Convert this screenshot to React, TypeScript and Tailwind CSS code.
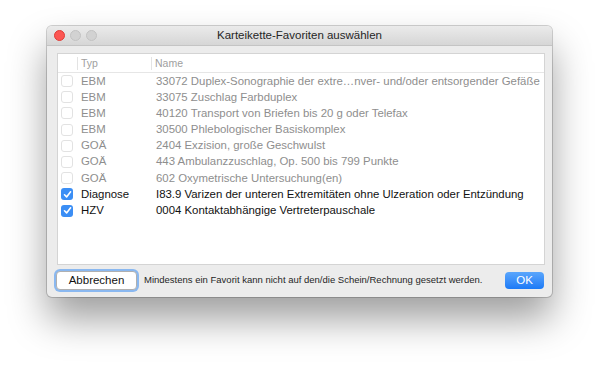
import React from "react";

const rows: { typ: string; name: string; checked: boolean }[] = [
  { typ: "EBM", name: "33072 Duplex-Sonographie der extre…nver- und/oder entsorgender Gefäße", checked: false },
  { typ: "EBM", name: "33075 Zuschlag Farbduplex", checked: false },
  { typ: "EBM", name: "40120 Transport von Briefen bis 20 g oder Telefax", checked: false },
  { typ: "EBM", name: "30500 Phlebologischer Basiskomplex", checked: false },
  { typ: "GOÄ", name: "2404 Exzision, große Geschwulst", checked: false },
  { typ: "GOÄ", name: "443 Ambulanzzuschlag, Op. 500 bis 799 Punkte", checked: false },
  { typ: "GOÄ", name: "602 Oxymetrische Untersuchung(en)", checked: false },
  { typ: "Diagnose", name: "I83.9 Varizen der unteren Extremitäten ohne Ulzeration oder Entzündung", checked: true },
  { typ: "HZV", name: "0004 Kontaktabhängige Vertreterpauschale", checked: true },
];

function Check({ checked }: { checked: boolean }) {
  if (checked) {
    return (
      <div className="w-[12px] h-[12px] rounded-[3px] bg-[#3b8ef5] flex items-center justify-center">
        <svg width="9" height="9" viewBox="0 0 9 9">
          <path d="M1.5 4.8 L3.6 6.9 L7.6 1.8" fill="none" stroke="white" strokeWidth="1.6" strokeLinecap="round" strokeLinejoin="round" />
        </svg>
      </div>
    );
  }
  return <div className="w-[12px] h-[12px] rounded-[3px] bg-white border border-[#e2e2e2]" />;
}

export default function App() {
  return (
    <div
      className="w-[600px] h-[365px] bg-white pl-[47px] pt-[26px] overflow-hidden"
      style={{ fontFamily: '"Liberation Sans", Arial, sans-serif' }}
    >
      <div className="w-[505px] h-[271px] bg-[#ececec] rounded-[5px] shadow-[0_0_0_1px_rgba(0,0,0,0.18),0_22px_38px_rgba(0,0,0,0.38)] flex flex-col overflow-hidden">
        {/* Title bar */}
        <div className="relative h-[20px] shrink-0 bg-gradient-to-b from-[#ebebeb] to-[#d6d6d6] border-b border-[#c4c4c4] flex items-center justify-center">
          <div className="absolute left-[7px] top-[4px] flex gap-[5px]">
            <div className="w-[11px] h-[11px] rounded-full bg-[#fc5753] border border-[#df3d39]" />
            <div className="w-[11px] h-[11px] rounded-full bg-[#d2d2d2] border border-[#c2c2c2]" />
            <div className="w-[11px] h-[11px] rounded-full bg-[#d2d2d2] border border-[#c2c2c2]" />
          </div>
          <span className="text-[11.5px] text-[#262626] leading-none">Karteikette-Favoriten auswählen</span>
        </div>

        {/* Table */}
        <div className="mt-[7px] ml-[10px] mr-[7px] h-[212px] bg-white border border-[#d4d4d4] flex flex-col">
          <div className="h-[19px] shrink-0 flex items-center border-b border-[#e6e6e6] text-[10.5px] text-[#a0a0a0]">
            <div className="w-[20px] h-[13px] shrink-0 border-r border-[#e3e3e3]" />
            <div className="w-[74px] h-[13px] shrink-0 pl-[3px] border-r border-[#e3e3e3] leading-[13px]">Typ</div>
            <div className="pl-[3px] leading-[13px]">Name</div>
          </div>
          {rows.map((r, i) => (
            <div
              key={i}
              className={`h-[16.2px] shrink-0 flex items-center text-[11.4px] ${r.checked ? "text-[#111]" : "text-[#8e8e8e]"}`}
            >
              <div className="w-[23px] shrink-0 pl-[3px] flex items-center">
                <Check checked={r.checked} />
              </div>
              <div className="w-[75px] shrink-0 whitespace-nowrap">{r.typ}</div>
              <div className="whitespace-nowrap">{r.name}</div>
            </div>
          ))}
        </div>

        {/* Footer */}
        <div className="mt-[6px] ml-[9px] mr-[8px] flex items-center">
          <button className="w-[81px] h-[19px] shrink-0 bg-white rounded-[4px] border border-[#b0b0b0] shadow-[0_0_0_2px_#8ab8f0] text-[11.5px] text-[#111] leading-none">
            Abbrechen
          </button>
          <span className="ml-[7px] text-[9.5px] text-[#262626] whitespace-nowrap">
            Mindestens ein Favorit kann nicht auf den/die Schein/Rechnung gesetzt werden.
          </span>
          <div className="flex-1" />
          <button className="w-[39px] h-[17px] shrink-0 rounded-[4px] bg-gradient-to-b from-[#5aa6fc] to-[#1a7af6] text-white text-[11.5px] leading-none">
            OK
          </button>
        </div>
      </div>
    </div>
  );
}
